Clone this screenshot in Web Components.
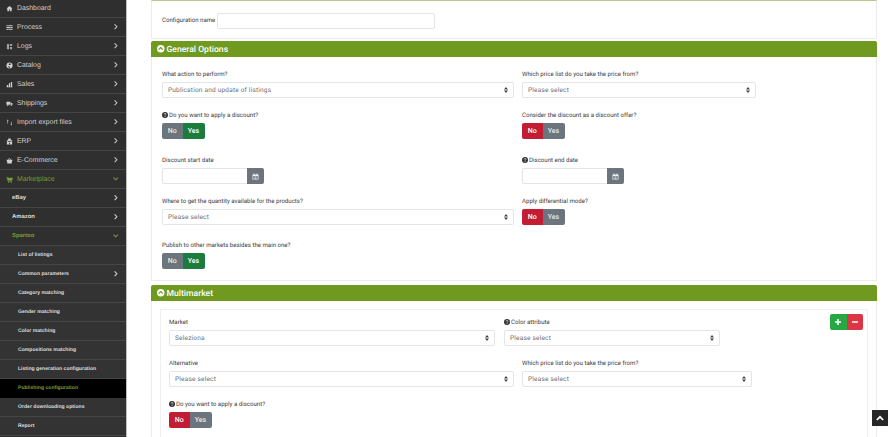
<!DOCTYPE html>
<html>
<head>
<meta charset="utf-8">
<title>Publishing configuration</title>
<style>
    html, body { margin: 0; height: 437px; overflow: hidden; background: #fff; }
    body { display: flex; font-family: Roboto, "Liberation Sans", sans-serif; text-rendering: geometricPrecision; }
</style>
</head>
<body>
<side-nav>
    <nav-item icon="home">Dashboard</nav-item>
    <nav-item icon="process" arrow="right">Process</nav-item>
    <nav-item icon="logs" arrow="right">Logs</nav-item>
    <nav-item icon="globe" arrow="right">Catalog</nav-item>
    <nav-item icon="chart" arrow="right">Sales</nav-item>
    <nav-item icon="truck" arrow="right">Shippings</nav-item>
    <nav-item icon="swap" arrow="right">Import export files</nav-item>
    <nav-item icon="building" arrow="right">ERP</nav-item>
    <nav-item icon="basket" arrow="right">E-Commerce</nav-item>
    <nav-item icon="cart" arrow="down" open>Marketplace</nav-item>
    <nav-item level="1" arrow="right">eBay</nav-item>
    <nav-item level="1" arrow="right">Amazon</nav-item>
    <nav-item level="1" arrow="down" open>Spartoo</nav-item>
    <nav-item level="2">List of listings</nav-item>
    <nav-item level="2" arrow="right">Common parameters</nav-item>
    <nav-item level="2">Category matching</nav-item>
    <nav-item level="2">Gender matching</nav-item>
    <nav-item level="2">Color matching</nav-item>
    <nav-item level="2">Compositions matching</nav-item>
    <nav-item level="2">Listing generation configuration</nav-item>
    <nav-item level="2" active>Publishing configuration</nav-item>
    <nav-item level="2">Order downloading options</nav-item>
    <nav-item level="2">Report</nav-item>
</side-nav>

<main-area>
    <name-card></name-card>

    <section-panel title="General Options" style="height:240px">
        <form-row cols="352px 234px" top="13">
            <form-select label="What action to perform?" value="Publication and update of listings"></form-select>
            <form-select label="Which price list do you take the price from?" value="Please select"></form-select>
        </form-row>
        <form-row cols="352px 234px" top="13">
            <toggle-pair label="Do you want to apply a discount?" help selected="yes"></toggle-pair>
            <toggle-pair label="Consider the discount as a discount offer?" selected="no"></toggle-pair>
        </form-row>
        <form-row cols="352px 234px" top="17">
            <date-field label="Discount start date"></date-field>
            <date-field label="Discount end date" help></date-field>
        </form-row>
        <form-row cols="352px 234px" top="13">
            <form-select label="Where to get the quantity available for the products?" value="Please select"></form-select>
            <toggle-pair label="Apply differential mode?" selected="no"></toggle-pair>
        </form-row>
        <form-row cols="352px 234px" top="16">
            <toggle-pair label="Publish to other markets besides the main one?" selected="yes"></toggle-pair>
        </form-row>
    </section-panel>

    <section-panel title="Multimarket" style="height:152px;margin-top:4px" inner>
        <market-box>
            <form-row cols="326px 216px" top="8" gap="9">
                <form-select label="Market" value="Seleziona"></form-select>
                <form-select label="Color attribute" value="Please select" help></form-select>
            </form-row>
            <form-row cols="345px 230px" top="13" gap="8">
                <form-select label="Alternative" value="Please select"></form-select>
                <form-select label="Which price list do you take the price from?" value="Please select"></form-select>
            </form-row>
            <form-row cols="326px" top="13">
                <toggle-pair label="Do you want to apply a discount?" help selected="no"></toggle-pair>
            </form-row>
        </market-box>
    </section-panel>

    <scroll-top></scroll-top>
</main-area>

<script>
const navIcons = {
    home: '<path d="M8 2 1 8h2v6h4v-4h2v4h4V8h2z"/>',
    process: '<path d="M1 3h14v2H1zM1 7h14v2H1zM1 11h14v2H1z"/><path fill="#2f2f2f" d="M4 3h1v2H4zM10 7h1v2h-1zM6 11h1v2H6z"/>',
    logs: '<path d="M2 2h5v12H2zM9 2h5v5H9zM9 9h5v5H9z" opacity=".7"/>',
    globe: '<path d="M8 1a7 7 0 1 0 0 14A7 7 0 0 0 8 1zm3 3-1 3H7L6 5l2-2zM5 9l3 1 1 3-2 1-1-2z" fill-rule="evenodd"/>',
    chart: '<path d="M1 13h14v1.500H1zM2 9h3v4H2zM6.500 5h3v8h-3zM11 2h3v11h-3z"/>',
    truck: '<path d="M1 4h9v7H1zM11 6h2l2 2v3h-4z"/><circle cx="4" cy="12" r="1.500"/><circle cx="12" cy="12" r="1.500"/>',
    swap: '<path d="M4 1 2 4h1.300v6h1.400V4H6zM12 15l2-3h-1.300V6h-1.400v6H10z"/>',
    building: '<path d="M2 5h12v10H2zM5 1h6v4H5z"/><path fill="#2f2f2f" d="M4 7h2v2H4zM7 7h2v2H7zM10 7h2v2h-2zM7 11h2v4H7z"/>',
    basket: '<path d="M1 6h14v2h-1l-1 7H3L2 8H1zM5 6l2-4 1 .5L6.500 6zM11 6 9 2l-1 .5L9.500 6z"/>',
    cart: '<path d="M0 2h3l.500 2H16l-2 6H5l.300 1H14v1.500H4L2 3.500H0z"/><circle cx="6" cy="14" r="1.400"/><circle cx="12" cy="14" r="1.400"/>'
};

class SideNav extends HTMLElement {
    constructor() {
        super();
        this.attachShadow({ mode: 'open' });
        this.shadowRoot.innerHTML = `
            <style>
                :host {
                    display: block;
                    flex: 0 0 127px;
                    width: 127px;
                    height: 437px;
                    overflow: hidden;
                    background: #2f2f2f;
                    border-right: 1px solid #bdbdbd;
                    box-sizing: border-box;
                }
            </style>
            <slot></slot>
        `;
    }
}

class NavItem extends HTMLElement {
    constructor() {
        super();
        this.attachShadow({ mode: 'open' });
    }

    connectedCallback() {
        const icon = this.getAttribute('icon');
        const arrow = this.getAttribute('arrow');
        const first = !this.previousElementSibling;
        const arrows = {
            right: '<path d="M3.500 1l5 5-5 5" fill="none" stroke="currentColor" stroke-width="2.200"/>',
            down: '<path d="M1 3.500l5 5 5-5" fill="none" stroke="currentColor" stroke-width="2.200"/>'
        };
        this.shadowRoot.innerHTML = `
            <style>
                :host {
                    display: flex;
                    align-items: center;
                    box-sizing: border-box;
                    flex: none;
                    height: ${first ? 17.5 : 19}px;
                    padding: 1px 6px 0 5px;
                    color: #cfcfcf;
                    font: 6.900px "Liberation Sans", Arial, sans-serif;
                    border-bottom: 1px solid #454545;
                    white-space: nowrap;
                }
                :host([level="1"]) { padding-left: 12px; font-size: 5.900px; font-weight: bold; color: #dcdcdc; }
                :host([level="2"]) { padding-left: 18px; font-size: 5.100px; font-weight: bold; background: #333; color: #dedede; }
                :host([open]) { color: #7a9c35; }
                :host([active]) { background: #000; color: #7a9c35; border-bottom-color: #000; }
                .icon { width: 7px; height: 7px; margin: 0 4px 0 1px; fill: currentColor; flex: none; }
                .label { flex: 1; }
                .arrow { width: 5.500px; height: 5.500px; margin-right: 2px; flex: none; }
            </style>
            ${icon ? `<svg class="icon" viewBox="0 0 16 16">${navIcons[icon]}</svg>` : ''}
            <span class="label"><slot></slot></span>
            ${arrow ? `<svg class="arrow" viewBox="0 0 12 12">${arrows[arrow]}</svg>` : ''}
        `;
    }
}

class MainArea extends HTMLElement {
    constructor() {
        super();
        this.attachShadow({ mode: 'open' });
        this.shadowRoot.innerHTML = `
            <style>
                :host {
                    display: block;
                    flex: 1;
                    position: relative;
                    height: 437px;
                    overflow: hidden;
                    padding: 0 13px 0 24px;
                    box-sizing: border-box;
                    color: #3b3b3b;
                    font: 6.100px Roboto, "Liberation Sans", sans-serif;
                }
            </style>
            <slot></slot>
        `;
    }
}

class NameCard extends HTMLElement {
    constructor() {
        super();
        this.attachShadow({ mode: 'open' });
        this.shadowRoot.innerHTML = `
            <style>
                :host {
                    display: flex;
                    align-items: center;
                    gap: 2px;
                    box-sizing: border-box;
                    height: 39px;
                    margin-bottom: 2px;
                    padding: 2px 10px 0;
                    border: 1px solid #ececec;
                    border-top: 1px solid #b9c890;
                }
                span { width: 53px; white-space: nowrap; }
                .box {
                    width: 218px;
                    height: 16px;
                    box-sizing: border-box;
                    border: 1px solid #e3e6e9;
                    border-radius: 2px;
                }
            </style>
            <span>Configuration name</span>
            <div class="box"></div>
        `;
    }
}

class SectionPanel extends HTMLElement {
    constructor() {
        super();
        this.attachShadow({ mode: 'open' });
    }

    connectedCallback() {
        const inner = this.hasAttribute('inner');
        this.shadowRoot.innerHTML = `
            <style>
                :host {
                    display: flex;
                    flex-direction: column;
                    box-sizing: border-box;
                }
                .head {
                    flex: none;
                    display: flex;
                    align-items: center;
                    gap: 2px;
                    height: 16px;
                    padding: 0 5px 0 6px;
                    background: #6f991f;
                    border-radius: 2px 2px 0 0;
                    color: #fff;
                    font-size: 8.600px;
                    font-weight: 500;
                }
                .head span { padding-top: 1px; }
                .head svg { width: 7.500px; height: 7.500px; }
                .body {
                    flex: 1;
                    padding: ${inner ? '8px 8px 0' : '0 0 0 10px'};
                    border: 1px solid #ececec;
                    border-top: 0;
                }
            </style>
            <div class="head">
                <svg viewBox="0 0 16 16"><circle cx="8" cy="8" r="8" fill="#fff"/><path d="M3.500 10 8 5.500l4.500 4.500" fill="none" stroke="#6f991f" stroke-width="2.500"/></svg>
                <span>${this.getAttribute('title')}</span>
            </div>
            <div class="body"><slot></slot></div>
        `;
        this.removeAttribute('title');
    }
}

class MarketBox extends HTMLElement {
    constructor() {
        super();
        this.attachShadow({ mode: 'open' });
        this.shadowRoot.innerHTML = `
            <style>
                :host {
                    display: block;
                    position: relative;
                    height: 140px;
                    box-sizing: border-box;
                    padding-left: 8px;
                    border: 1px solid #f0f0f0;
                }
                .actions {
                    position: absolute;
                    top: 4px;
                    right: 4px;
                    display: flex;
                }
                .actions div {
                    width: 16.500px;
                    height: 16px;
                    display: flex;
                    align-items: center;
                    justify-content: center;
                    color: #fff;
                }
                .add { background: #28a745; border-radius: 2px 0 0 2px; }
                .del { background: #dc3545; border-radius: 0 2px 2px 0; }
                svg { width: 6px; height: 6px; fill: #fff; }
            </style>
            <slot></slot>
            <div class="actions">
                <div class="add"><svg viewBox="0 0 8 8"><path d="M3 0h2v3h3v2H5v3H3V5H0V3h3z"/></svg></div>
                <div class="del"><svg viewBox="0 0 8 8"><path d="M0 3h8v2H0z"/></svg></div>
            </div>
        `;
    }
}

class FormRow extends HTMLElement {
    constructor() {
        super();
        this.attachShadow({ mode: 'open' });
    }

    connectedCallback() {
        const cols = this.getAttribute('cols');
        const top = this.getAttribute('top') || 0;
        const gap = this.getAttribute('gap') || 8;
        this.shadowRoot.innerHTML = `
            <style>
                :host {
                    display: grid;
                    grid-template-columns: ${cols};
                    column-gap: ${gap}px;
                    padding-top: ${top}px;
                }
            </style>
            <slot></slot>
        `;
    }
}

const helpIcon = '<svg viewBox="0 0 16 16" style="width:6px;height:6px;margin-right:1px;vertical-align:-0.500px"><circle cx="8" cy="8" r="8" fill="#333"/><path d="M5.500 6.200C5.500 4.800 6.600 4 8 4s2.600.8 2.600 2.200C10.600 8 8.200 8 8.200 9.600" fill="none" stroke="#fff" stroke-width="1.800"/><rect x="7.200" y="10.800" width="2" height="2" fill="#fff"/></svg>';
const fieldLabelCss = `
    label { display: block; height: 12px; line-height: 9px; white-space: nowrap; }
`;

class FormSelect extends HTMLElement {
    constructor() {
        super();
        this.attachShadow({ mode: 'open' });
    }

    connectedCallback() {
        this.shadowRoot.innerHTML = `
            <style>
                :host { display: block; }
                ${fieldLabelCss}
                .control {
                    display: flex;
                    align-items: center;
                    justify-content: space-between;
                    box-sizing: border-box;
                    height: 16px;
                    padding: 0 5px;
                    border: 1px solid #e3e6e9;
                    border-radius: 2px;
                    color: #6a7077;
                    font-size: 6.500px;
                    letter-spacing: .2px;
                }
                svg { width: 4px; height: 6px; fill: #40454a; }
            </style>
            <label>${this.hasAttribute('help') ? helpIcon : ''}${this.getAttribute('label')}</label>
            <div class="control">
                <span>${this.getAttribute('value')}</span>
                <svg viewBox="0 0 8 12"><path d="M4 0l4 5H0zM4 12 0 7h8z"/></svg>
            </div>
        `;
    }
}

class TogglePair extends HTMLElement {
    constructor() {
        super();
        this.attachShadow({ mode: 'open' });
    }

    connectedCallback() {
        const selected = this.getAttribute('selected');
        this.shadowRoot.innerHTML = `
            <style>
                :host { display: block; }
                ${fieldLabelCss}
                .group { display: flex; width: max-content; }
                .group div {
                    display: flex;
                    align-items: center;
                    justify-content: center;
                    height: 16px;
                    color: #e8e8e8;
                    background: #6c757d;
                    font-size: 7px;
                    font-weight: 500;
                }
                .no { width: 20.500px; border-radius: 2px 0 0 2px; }
                .yes { width: 22px; border-radius: 0 2px 2px 0; }
                .group .on-yes { background: #1c7c3d; color: #fff; }
                .group .on-no { background: #c21d33; color: #fff; }
            </style>
            <label>${this.hasAttribute('help') ? helpIcon : ''}${this.getAttribute('label')}</label>
            <div class="group">
                <div class="no ${selected === 'no' ? 'on-no' : ''}">No</div>
                <div class="yes ${selected === 'yes' ? 'on-yes' : ''}">Yes</div>
            </div>
        `;
    }
}

class DateField extends HTMLElement {
    constructor() {
        super();
        this.attachShadow({ mode: 'open' });
    }

    connectedCallback() {
        this.shadowRoot.innerHTML = `
            <style>
                :host { display: block; }
                ${fieldLabelCss}
                .group { display: flex; width: 102px; height: 16px; }
                .box {
                    flex: 1;
                    box-sizing: border-box;
                    border: 1px solid #e3e6e9;
                    border-right: 0;
                    border-radius: 2px 0 0 2px;
                }
                .btn {
                    width: 17.500px;
                    display: flex;
                    align-items: center;
                    justify-content: center;
                    background: #6c757d;
                    border-radius: 0 2px 2px 0;
                }
                svg { width: 7px; height: 7px; fill: #eef0f1; }
            </style>
            <label>${this.hasAttribute('help') ? helpIcon : ''}${this.getAttribute('label')}</label>
            <div class="group">
                <div class="box"></div>
                <div class="btn"><svg viewBox="0 0 14 14"><path d="M1 3h2V1h2v2h4V1h2v2h2v10H1zm1 3v6h10V6z" fill-rule="evenodd"/><path d="M3 7h2v2H3zM6 7h2v2H6zM9 7h2v2H9zM3 10h2v1.500H3zM6 10h2v1.500H6zM9 10h2v1.500H9z"/></svg></div>
            </div>
        `;
    }
}

class ScrollTop extends HTMLElement {
    constructor() {
        super();
        this.attachShadow({ mode: 'open' });
        this.shadowRoot.innerHTML = `
            <style>
                :host {
                    position: absolute;
                    left: 745px;
                    top: 410px;
                    width: 16px;
                    height: 16px;
                    display: flex;
                    align-items: center;
                    justify-content: center;
                    background: #272727;
                }
                svg { width: 8px; height: 6px; }
            </style>
            <svg viewBox="0 0 10 7"><path d="M1 6l4-4 4 4" fill="none" stroke="#fff" stroke-width="2.200"/></svg>
        `;
    }
}

customElements.define('side-nav', SideNav);
customElements.define('nav-item', NavItem);
customElements.define('main-area', MainArea);
customElements.define('name-card', NameCard);
customElements.define('section-panel', SectionPanel);
customElements.define('market-box', MarketBox);
customElements.define('form-row', FormRow);
customElements.define('form-select', FormSelect);
customElements.define('toggle-pair', TogglePair);
customElements.define('date-field', DateField);
customElements.define('scroll-top', ScrollTop);
</script>
</body>
</html>
